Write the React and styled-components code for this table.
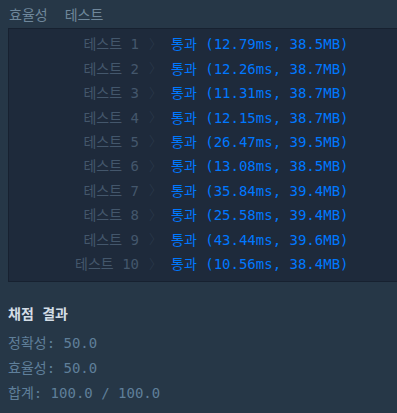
import React from "react";
import styled, { createGlobalStyle } from "styled-components";

const Global = createGlobalStyle`
  html, body { margin: 0; padding: 0; background: #263747; }
  body { font-family: "DejaVu Sans Mono", "Noto Sans CJK KR", monospace; }
`;

const Page = styled.div`
  width: 397px;
  height: 413px;
  overflow: hidden;
  padding-left: 8px;
  box-sizing: border-box;
`;

const Title = styled.div`
  height: 28px;
  display: flex;
  align-items: center;
  gap: 17px;
  padding-left: 1px;
  font-size: 14px;
  color: #6f879b;
  font-family: "Noto Sans CJK KR", sans-serif;
`;

const Console = styled.div`
  background: #1e2a3b;
  border: 1px solid #172130;
  border-right: none;
  padding: 2px 0 6px;
`;

const Row = styled.div`
  display: grid;
  grid-template-columns: 130px 32px 1fr;
  height: 24.45px;
  align-items: center;
  font-size: 14px;
`;

const Label = styled.span`
  text-align: right;
  color: #44576c;
  white-space: pre;
`;

const Chevron = styled.span`
  color: #2c3b4d;
  padding-left: 10px;
  font-family: "Noto Sans CJK KR", sans-serif;
  font-size: 13px;
  font-weight: 300;
`;

const Result = styled.span`
  color: #0078ff;
  white-space: pre;
`;

const Summary = styled.div`
  padding-top: 19px;
`;

const SummaryTitle = styled.div`
  height: 24px;
  display: flex;
  align-items: center;
  color: #d3dde6;
  font-size: 14px;
  font-weight: bold;
`;

const Line = styled.div`
  height: 25px;
  display: flex;
  align-items: center;
  color: #5f7f9a;
  font-size: 14px;
  white-space: pre;
  &:first-of-type { margin-top: 4px; }
`;

const tests = [
  ["12.79ms", "38.5MB"],
  ["12.26ms", "38.7MB"],
  ["11.31ms", "38.7MB"],
  ["12.15ms", "38.7MB"],
  ["26.47ms", "39.5MB"],
  ["13.08ms", "38.5MB"],
  ["35.84ms", "39.4MB"],
  ["25.58ms", "39.4MB"],
  ["43.44ms", "39.6MB"],
  ["10.56ms", "38.4MB"],
];

export default function App() {
  return (
    <Page>
      <Global />
      <Title>
        <span>효율성</span>
        <span>테스트</span>
      </Title>
      <Console>
        {tests.map(([t, m], i) => (
          <Row key={i}>
            <Label>테스트 {i + 1}</Label>
            <Chevron>〉</Chevron>
            <Result>통과 ({t}, {m})</Result>
          </Row>
        ))}
      </Console>
      <Summary>
        <SummaryTitle>채점 결과</SummaryTitle>
        <div>
          <Line>정확성: 50.0</Line>
          <Line>효율성: 50.0</Line>
          <Line>합계: 100.0 / 100.0</Line>
        </div>
      </Summary>
    </Page>
  );
}
